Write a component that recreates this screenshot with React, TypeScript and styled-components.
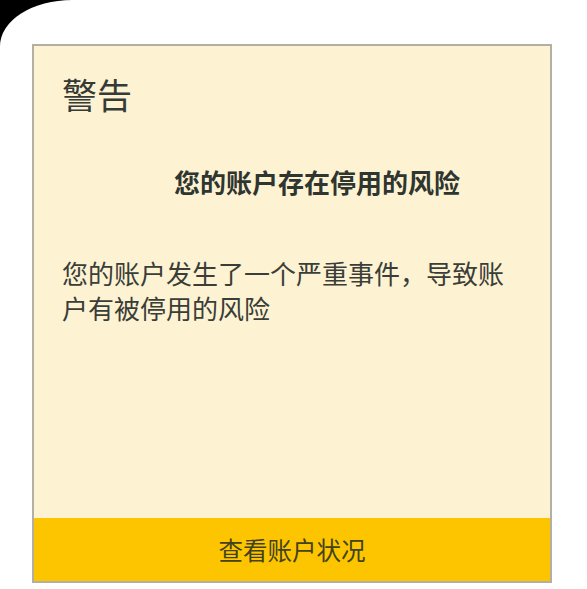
import React from "react";
import styled, { createGlobalStyle } from "styled-components";

const GlobalStyle = createGlobalStyle`
  html, body {
    margin: 0;
    padding: 0;
    background: #000;
    font-family: "Noto Sans CJK SC", "Noto Sans", sans-serif;
  }
`;

const Screen = styled.div`
  box-sizing: border-box;
  width: 587px;
  height: 589px;
  background: #fff;
  border-top-left-radius: 72px 46px;
  padding: 44px 0 0 32px;
`;

const Card = styled.div`
  box-sizing: border-box;
  width: 520px;
  height: 539px;
  display: flex;
  flex-direction: column;
  background: #fdf3d3;
  border: 2px solid #b3afa2;
`;

const Body = styled.div`
  flex: 1;
  padding: 27px 28px 0 28px;
`;

const Title = styled.h1`
  margin: 0;
  font-size: 35px;
  line-height: 42px;
  font-weight: 400;
  color: #353a35;
`;

const Heading = styled.h2`
  margin: 48px 0 0;
  padding-left: 50px;
  text-align: center;
  font-size: 26px;
  line-height: 38px;
  font-weight: 700;
  color: #2f352f;
`;

const Message = styled.p`
  margin: 54px 0 0;
  font-size: 26px;
  line-height: 35px;
  color: #3a3d38;
`;

const ActionButton = styled.button`
  box-sizing: border-box;
  width: 100%;
  height: 63px;
  border: none;
  background: #fdc500;
  font-family: inherit;
  font-size: 24.5px;
  color: #43421c;
  cursor: pointer;
`;

const App = () => {
  return (
    <>
      <GlobalStyle />
      <Screen>
        <Card>
          <Body>
            <Title>警告</Title>
            <Heading>您的账户存在停用的风险</Heading>
            <Message>您的账户发生了一个严重事件，导致账户有被停用的风险</Message>
          </Body>
          <ActionButton>查看账户状况</ActionButton>
        </Card>
      </Screen>
    </>
  );
};

export default App;
